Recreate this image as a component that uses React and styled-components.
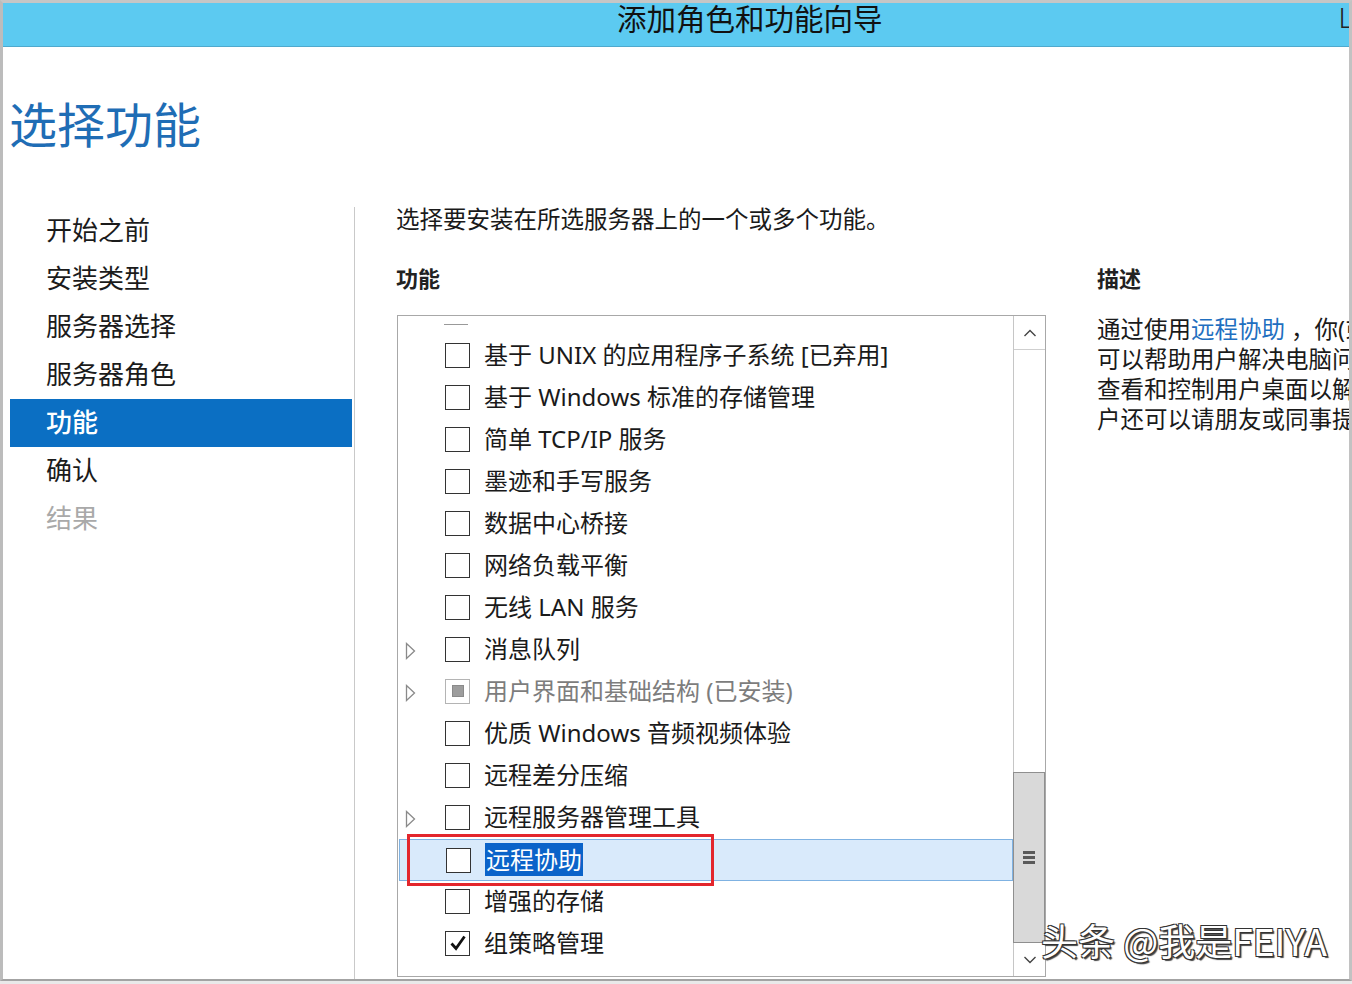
import React from "react";
import styled, { createGlobalStyle } from "styled-components";

const GlobalStyle = createGlobalStyle`
  html, body {
    margin: 0;
    padding: 0;
    background: #e9e9e9;
  }
  body {
    font-family: "Noto Sans", "Noto Sans CJK SC", sans-serif;
    color: #1a1a1a;
  }
`;

const features = [
  { label: "基于 UNIX 的应用程序子系统 [已弃用]" },
  { label: "基于 Windows 标准的存储管理" },
  { label: "简单 TCP/IP 服务" },
  { label: "墨迹和手写服务" },
  { label: "数据中心桥接" },
  { label: "网络负载平衡" },
  { label: "无线 LAN 服务" },
  { label: "消息队列", expandable: true },
  { label: "用户界面和基础结构 (已安装)", expandable: true, disabled: true },
  { label: "优质 Windows 音频视频体验" },
  { label: "远程差分压缩" },
  { label: "远程服务器管理工具", expandable: true },
  { label: "远程协助", selected: true },
  { label: "增强的存储" },
  { label: "组策略管理", checked: true },
  { label: "" },
];

const steps = ["开始之前", "安装类型", "服务器选择", "服务器角色", "功能", "确认", "结果"];

function App() {
  return (
    <>
      <GlobalStyle />
      <Window>
        <TitleBar>
          <Title>添加角色和功能向导</Title>
          <TitleEdge>L</TitleEdge>
        </TitleBar>

        <PageHeading>选择功能</PageHeading>

        <Body>
          <Nav>
            {steps.map((s, i) => (
              <NavItem key={s} active={i === 4} muted={i === 6}>
                {s}
              </NavItem>
            ))}
          </Nav>

          <Content>
            <MainColumn>
              <Instruction>选择要安装在所选服务器上的一个或多个功能。</Instruction>
              <SectionLabel>功能</SectionLabel>
              <ListBox>
                <Rows>
                  <GhostRow>
                    <ArrowSlot />
                    <GhostBox />
                  </GhostRow>
                  {features.map((f, i) => (
                    <Row key={i} selected={f.selected}>
                      <ArrowSlot>
                        {f.expandable && (
                          <svg width="11" height="18" viewBox="0 0 11 18">
                            <polygon
                              points="1.5,1.5 9.5,9 1.5,16.5"
                              fill="none"
                              stroke="#8a8a8a"
                              strokeWidth="1.3"
                            />
                          </svg>
                        )}
                      </ArrowSlot>
                      {f.label && (
                        <CheckBox disabled={f.disabled}>
                          {f.disabled && <Indeterminate />}
                          {f.checked && (
                            <svg width="20" height="20" viewBox="0 0 20 20">
                              <path
                                d="M3.5 10.5 L8 15.5 L16.5 3.5"
                                fill="none"
                                stroke="#111"
                                strokeWidth="2.8"
                              />
                            </svg>
                          )}
                        </CheckBox>
                      )}
                      <Label disabled={f.disabled}>
                        {f.selected ? <Highlight>{f.label}</Highlight> : f.label}
                      </Label>
                      {f.selected && <RedMark />}
                    </Row>
                  ))}
                </Rows>
                <ScrollBar>
                  <ScrollButton top>
                    <svg width="14" height="10" viewBox="0 0 14 10">
                      <path d="M1.5 8 L7 2.5 L12.5 8" fill="none" stroke="#444" strokeWidth="1.4" />
                    </svg>
                  </ScrollButton>
                  <Track />
                  <Thumb>
                    <Grip />
                    <Grip />
                    <Grip />
                  </Thumb>
                  <ScrollButton>
                    <svg width="14" height="10" viewBox="0 0 14 10">
                      <path d="M1.5 2 L7 7.5 L12.5 2" fill="none" stroke="#444" strokeWidth="1.4" />
                    </svg>
                  </ScrollButton>
                </ScrollBar>
              </ListBox>
            </MainColumn>

            <DescColumn>
              <SectionLabel desc>描述</SectionLabel>
              <DescText>
                <DescLine>
                  通过使用<Link>远程协助</Link> ，你(或支持人员)
                </DescLine>
                <DescLine>可以帮助用户解决电脑问题。远程协助</DescLine>
                <DescLine>查看和控制用户桌面以解决问题。</DescLine>
                <DescLine>户还可以请朋友或同事提供帮助。</DescLine>
              </DescText>
            </DescColumn>
          </Content>
        </Body>

        <Watermark>头条 @我是FEIYA</Watermark>
      </Window>
    </>
  );
}

const Window = styled.div`
  position: relative;
  width: 1352px;
  height: 981px;
  box-sizing: border-box;
  background: #fff;
  border-top: 3px solid #c6c6c6;
  border-left: 3px solid #bcbcbc;
  border-right: 3px solid #c2c2c2;
  border-bottom: 2px solid #a3a3a3;
  display: flex;
  flex-direction: column;
  overflow: hidden;
`;

const TitleBar = styled.div`
  height: 44px;
  box-sizing: border-box;
  background: #5ccaf1;
  border-bottom: 1px solid #4fa9cd;
  display: flex;
  align-items: flex-start;
  padding-left: 614px;
`;

const Title = styled.div`
  flex: 1;
  font-family: "Noto Sans CJK SC", sans-serif;
  font-size: 29.5px;
  line-height: 28px;
  color: #111;
`;

const TitleEdge = styled.div`
  font-family: "Noto Sans", sans-serif;
  font-weight: 300;
  font-size: 28px;
  line-height: 28px;
  color: #222;
  margin-right: -4px;
`;

const PageHeading = styled.h1`
  margin: 0;
  padding: 45px 0 0 6px;
  height: 158px;
  box-sizing: border-box;
  font-family: "Noto Sans CJK SC", sans-serif;
  font-weight: 400;
  font-size: 48px;
  line-height: 60px;
  color: #1f6db5;
`;

const Body = styled.div`
  flex: 1;
  display: flex;
  min-height: 0;
`;

const Nav = styled.nav`
  width: 352px;
  box-sizing: border-box;
  padding: 0 2px 0 7px;
  border-right: 1px solid #c9c9c9;
  margin-top: 2px;
`;

const NavItem = styled.div`
  height: 48px;
  padding-left: 36px;
  padding-bottom: 5px;
  box-sizing: border-box;
  display: flex;
  align-items: center;
  font-family: "Noto Sans CJK SC", sans-serif;
  font-size: 26px;
  color: ${(p) => (p.active ? "#fff" : p.muted ? "#a9a9a9" : "#1b1b1b")};
  background: ${(p) => (p.active ? "#0b6fc3" : "transparent")};
  font-weight: ${(p) => (p.active ? 500 : 400)};
`;

const Content = styled.div`
  flex: 1;
  min-width: 0;
  display: grid;
  grid-template-columns: 650px 1fr;
  column-gap: 51px;
  padding-left: 41px;
  overflow: hidden;
`;

const MainColumn = styled.div`
  display: flex;
  flex-direction: column;
`;

const Instruction = styled.div`
  font-size: 23.5px;
  line-height: 28px;
  color: #1a1a1a;
`;

const SectionLabel = styled.div`
  margin-top: ${(p) => (p.desc ? "58px" : "30px")};
  font-family: "Noto Sans CJK SC", sans-serif;
  font-size: 22px;
  line-height: 28px;
  font-weight: 700;
  color: #222;
`;

const ListBox = styled.div`
  margin: 24px 0 0 1px;
  height: 662px;
  box-sizing: border-box;
  border: 1px solid #a8a8a8;
  display: flex;
  overflow: hidden;
`;

const Rows = styled.div`
  flex: 1;
  overflow: hidden;
  display: flex;
  flex-direction: column;
`;

const GhostRow = styled.div`
  height: 42px;
  margin-top: -24px;
  flex-shrink: 0;
  display: flex;
  align-items: center;
`;

const GhostBox = styled.div`
  width: 24px;
  height: 24px;
  box-sizing: border-box;
  border-bottom: 1.5px solid #999;
`;

const Row = styled.div`
  position: relative;
  height: 42px;
  flex-shrink: 0;
  box-sizing: border-box;
  display: flex;
  align-items: center;
  margin-left: ${(p) => (p.selected ? "1px" : "0")};
  background: ${(p) => (p.selected ? "#d9eafb" : "transparent")};
  border: 1px solid ${(p) => (p.selected ? "#7fb2e2" : "transparent")};
  margin-top: ${(p) => (p.selected ? "1px" : "0")};
  margin-bottom: ${(p) => (p.selected ? "-1px" : "0")};
`;

const ArrowSlot = styled.div`
  width: 46px;
  flex-shrink: 0;
  padding-left: 6px;
  box-sizing: border-box;
  display: flex;
  align-items: center;
  padding-top: 4px;
`;

const CheckBox = styled.div`
  width: 25px;
  height: 25px;
  box-sizing: border-box;
  flex-shrink: 0;
  border: 1.5px solid ${(p) => (p.disabled ? "#b4b4b4" : "#333")};
  background: #fff;
  display: flex;
  align-items: center;
  justify-content: center;
`;

const Indeterminate = styled.div`
  width: 12px;
  height: 12px;
  background: #9d9d9d;
  border: 1px solid #8a8a8a;
  box-sizing: border-box;
`;

const Label = styled.div`
  margin-left: 14px;
  font-size: 24px;
  line-height: 28px;
  white-space: nowrap;
  color: ${(p) => (p.disabled ? "#7d7d7d" : "#1a1a1a")};
`;

const Highlight = styled.span`
  background: #0b63c9;
  color: #fff;
  padding: 0 1px;
`;

const RedMark = styled.div`
  position: absolute;
  left: 7px;
  top: -6px;
  width: 307px;
  height: 52px;
  box-sizing: border-box;
  border: 3px solid #e3262c;
  pointer-events: none;
`;

const ScrollBar = styled.div`
  width: 32px;
  flex-shrink: 0;
  box-sizing: border-box;
  border-left: 1px solid #c6c6c6;
  display: flex;
  flex-direction: column;
`;

const ScrollButton = styled.div`
  height: ${(p) => (p.top ? "34px" : "33px")};
  flex-shrink: 0;
  display: flex;
  align-items: center;
  justify-content: center;
  border-bottom: ${(p) => (p.top ? "1px solid #cfcfcf" : "none")};
  box-sizing: border-box;
`;

const Track = styled.div`
  flex: 1;
  background: #fff;
`;

const Thumb = styled.div`
  height: 171px;
  flex-shrink: 0;
  margin-left: -1px;
  box-sizing: border-box;
  background: #d9d9d9;
  border: 1px solid #8f8f8f;
  display: flex;
  flex-direction: column;
  align-items: center;
  justify-content: center;
  gap: 2px;
`;

const Grip = styled.div`
  width: 12px;
  height: 3px;
  background: #5a5a5a;
`;

const DescColumn = styled.div`
  min-width: 0;
  overflow: hidden;
`;

const DescText = styled.div`
  margin-top: 23px;
  font-size: 23.5px;
  line-height: 30px;
  color: #1a1a1a;
`;

const DescLine = styled.div`
  white-space: nowrap;
`;

const Link = styled.span`
  color: #1f6fc0;
`;

const Watermark = styled.div`
  position: absolute;
  right: 22px;
  top: 914px;
  font-family: "Noto Sans CJK SC", sans-serif;
  font-size: 37px;
  line-height: 46px;
  color: #fff;
  text-shadow: -1px -1px 0 #333, 1px 1px 0 #333, 2px 2px 1px #444, -1px 1px 0 #333, 1px -1px 0 #333;
  white-space: nowrap;
`;

export default App;
